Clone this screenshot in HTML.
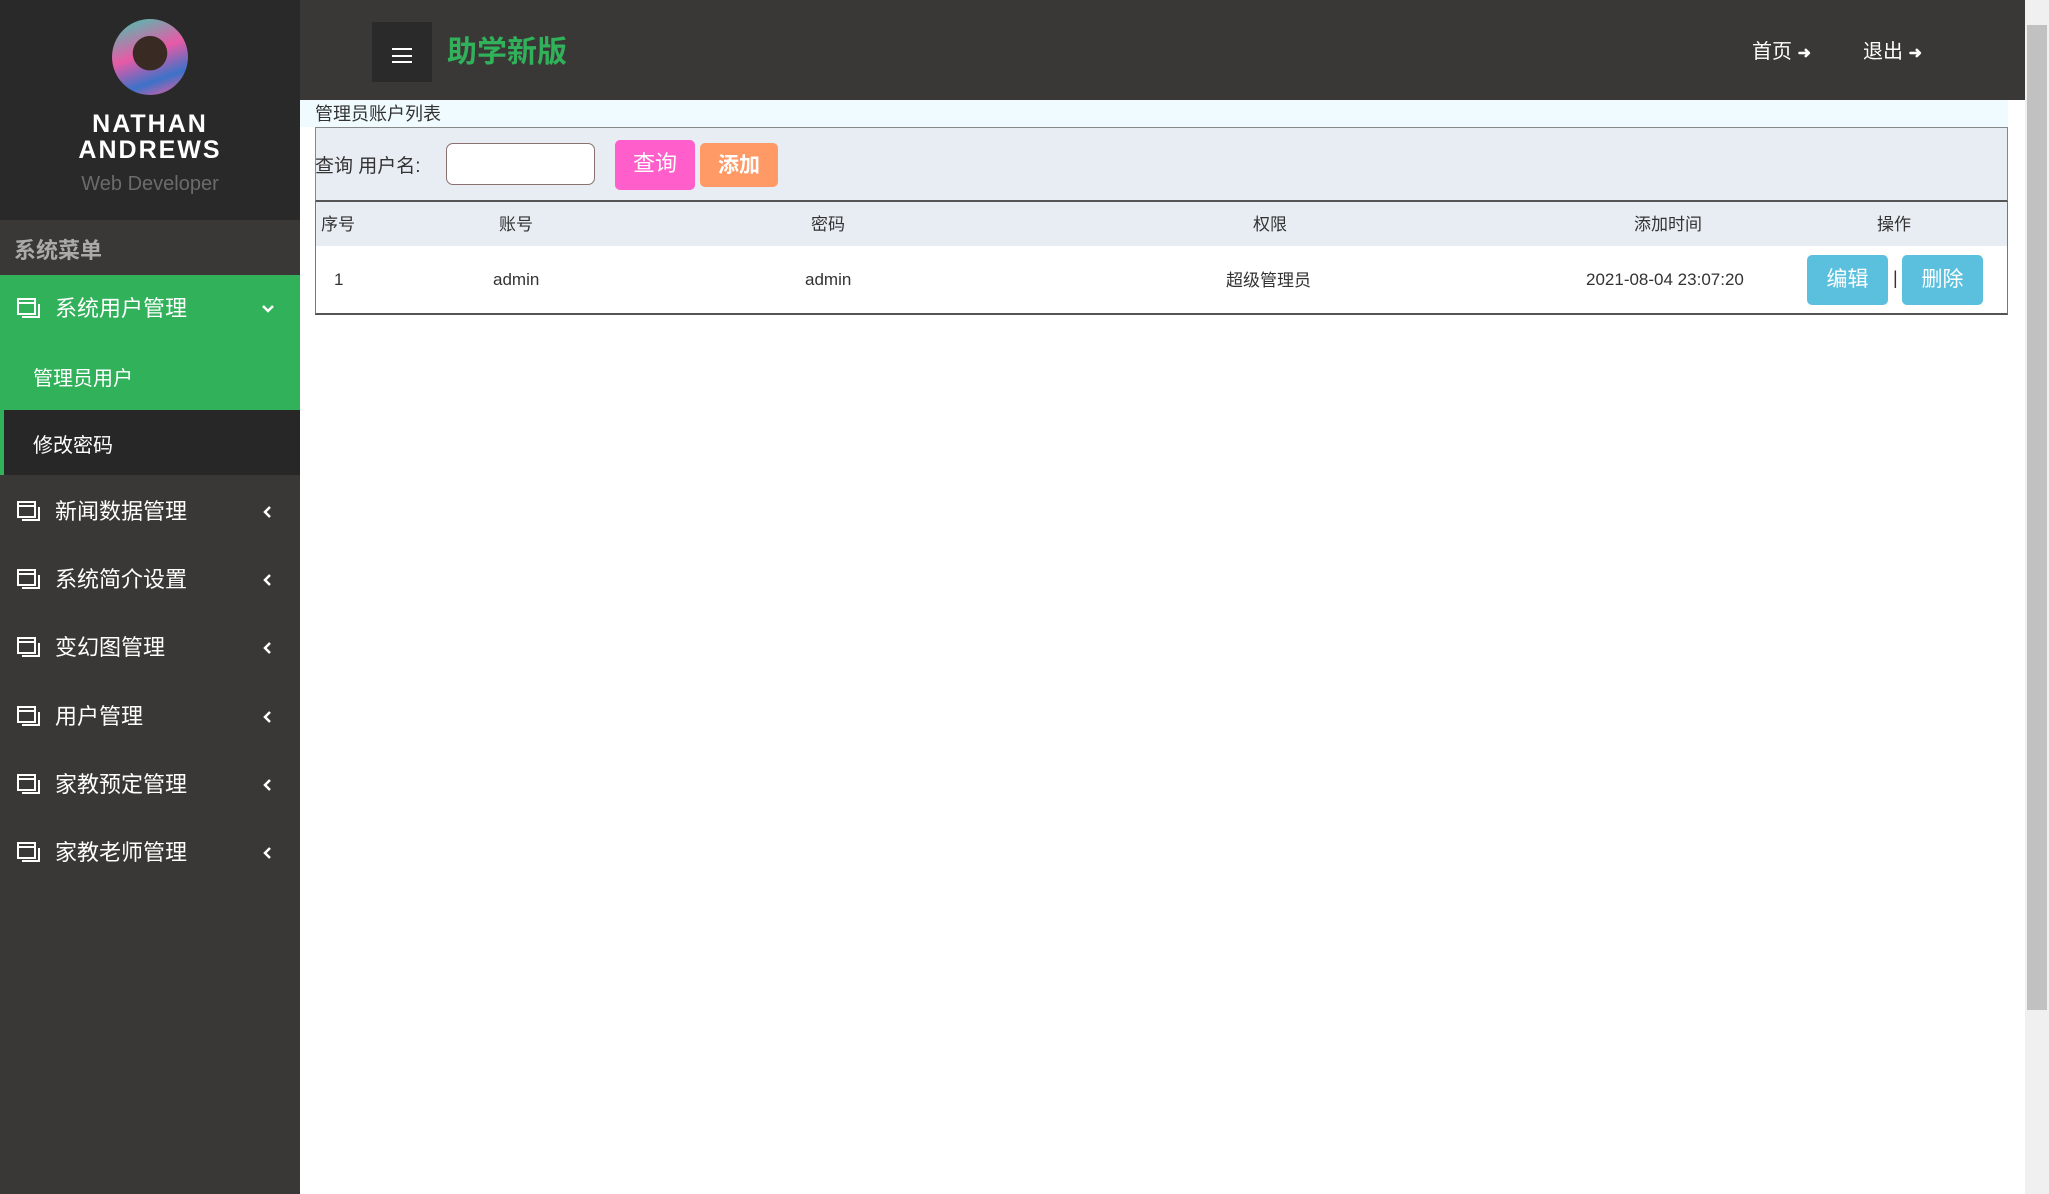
<!DOCTYPE html>
<html><head><meta charset="utf-8"><style>
*{margin:0;padding:0;box-sizing:border-box}
body{width:2049px;height:1194px;overflow:hidden;background:#fff;font-family:"Liberation Sans","Noto Sans CJK SC",sans-serif;position:relative}
.abs{position:absolute}
#side{left:0;top:0;width:300px;height:1194px;background:#3a3837}
#prof{left:0;top:0;width:300px;height:220px;background:#292929}
#head{left:300px;top:0;width:1725px;height:100px;background:#3a3837}
.mi{position:absolute;left:0;width:300px;height:68px;color:#fff;font-size:22px;line-height:68px}
.mi svg.ic{position:absolute;left:17px;top:23px}
.mi span{position:absolute;left:55px}
.mi svg.ch{position:absolute;left:261px;top:27px}
</style></head><body>
<div id="side" class="abs"></div>
<div id="prof" class="abs"></div>
<div class="abs" style="left:112px;top:19px;width:76px;height:76px;border-radius:50%;background:radial-gradient(circle at 50% 45%,#3a2a24 0 30%,transparent 31%),linear-gradient(160deg,#3fc9b0 0,#e85aa6 45%,#3b72c8 75%,#ff5a9c 100%)"></div>
<div class="abs" style="left:0;top:111px;width:300px;text-align:center;color:#fff;font-weight:bold;font-size:25px;line-height:26px;letter-spacing:2px">NATHAN<br>ANDREWS</div>
<div class="abs" style="left:0;top:173px;width:300px;text-align:center;color:#6b6b6b;font-size:20px">Web Developer</div>
<div class="abs" style="left:0;top:220px;width:300px;height:55px;background:#3a3837"></div>
<div class="abs" style="left:14px;top:233px;color:#aaa;font-weight:bold;font-size:22px">系统菜单</div>
<div class="abs" style="left:0;top:275px;width:300px;height:135px;background:#30b15a"></div>
<div class="mi" style="top:275px"><svg class="ic" width="24" height="22" viewBox="0 0 24 22" fill="none" stroke="#fff" stroke-width="2"><rect x="1" y="1" width="17" height="15"/><path d="M1 5h17M5 19h17V6"/></svg><span>系统用户管理</span><svg class="ch" width="14" height="14" viewBox="0 0 14 14" fill="none" stroke="#fff" stroke-width="2.5"><path d="M2 4l5 5 5-5"/></svg></div>
<div class="abs" style="left:33px;top:362px;color:#fff;font-size:20px">管理员用户</div>
<div class="abs" style="left:0;top:410px;width:300px;height:65px;background:#272727;border-left:4px solid #30b15a"></div>
<div class="abs" style="left:33px;top:429px;color:#fff;font-size:20px">修改密码</div>
<div class="mi" style="top:478px"><svg class="ic" width="24" height="22" viewBox="0 0 24 22" fill="none" stroke="#fff" stroke-width="2"><rect x="1" y="1" width="17" height="15"/><path d="M1 5h17M5 19h17V6"/></svg><span>新闻数据管理</span><svg class="ch" width="14" height="14" viewBox="0 0 14 14" fill="none" stroke="#fff" stroke-width="2.5"><path d="M9 2L4 7l5 5"/></svg></div>
<div class="mi" style="top:546px"><svg class="ic" width="24" height="22" viewBox="0 0 24 22" fill="none" stroke="#fff" stroke-width="2"><rect x="1" y="1" width="17" height="15"/><path d="M1 5h17M5 19h17V6"/></svg><span>系统简介设置</span><svg class="ch" width="14" height="14" viewBox="0 0 14 14" fill="none" stroke="#fff" stroke-width="2.5"><path d="M9 2L4 7l5 5"/></svg></div>
<div class="mi" style="top:614px"><svg class="ic" width="24" height="22" viewBox="0 0 24 22" fill="none" stroke="#fff" stroke-width="2"><rect x="1" y="1" width="17" height="15"/><path d="M1 5h17M5 19h17V6"/></svg><span>变幻图管理</span><svg class="ch" width="14" height="14" viewBox="0 0 14 14" fill="none" stroke="#fff" stroke-width="2.5"><path d="M9 2L4 7l5 5"/></svg></div>
<div class="mi" style="top:683px"><svg class="ic" width="24" height="22" viewBox="0 0 24 22" fill="none" stroke="#fff" stroke-width="2"><rect x="1" y="1" width="17" height="15"/><path d="M1 5h17M5 19h17V6"/></svg><span>用户管理</span><svg class="ch" width="14" height="14" viewBox="0 0 14 14" fill="none" stroke="#fff" stroke-width="2.5"><path d="M9 2L4 7l5 5"/></svg></div>
<div class="mi" style="top:751px"><svg class="ic" width="24" height="22" viewBox="0 0 24 22" fill="none" stroke="#fff" stroke-width="2"><rect x="1" y="1" width="17" height="15"/><path d="M1 5h17M5 19h17V6"/></svg><span>家教预定管理</span><svg class="ch" width="14" height="14" viewBox="0 0 14 14" fill="none" stroke="#fff" stroke-width="2.5"><path d="M9 2L4 7l5 5"/></svg></div>
<div class="mi" style="top:819px"><svg class="ic" width="24" height="22" viewBox="0 0 24 22" fill="none" stroke="#fff" stroke-width="2"><rect x="1" y="1" width="17" height="15"/><path d="M1 5h17M5 19h17V6"/></svg><span>家教老师管理</span><svg class="ch" width="14" height="14" viewBox="0 0 14 14" fill="none" stroke="#fff" stroke-width="2.5"><path d="M9 2L4 7l5 5"/></svg></div>

<div id="head" class="abs"></div>
<div class="abs" style="left:372px;top:22px;width:60px;height:60px;background:#2a2a2a"></div>
<div class="abs" style="left:392px;top:48px;width:20px;height:15px;border-top:2px solid #fff;border-bottom:2px solid #fff"><div style="margin-top:4.5px;height:2px;background:#fff"></div></div>
<div class="abs" style="left:447px;top:27px;color:#30b15a;font-size:30px;font-weight:bold">助学新版</div>
<div class="abs" style="left:1752px;top:35px;color:#fff;font-size:20px">首页 <b style="font-size:16px">➜</b></div>
<div class="abs" style="left:1863px;top:35px;color:#fff;font-size:20px">退出 <b style="font-size:16px">➜</b></div>

<div class="abs" style="left:2025px;top:0;width:24px;height:1194px;background:#f0f0f0"></div>
<div class="abs" style="left:2027px;top:25px;width:20px;height:985px;background:#c1c1c1"></div>

<div class="abs" style="left:300px;top:100px;width:1708px;height:27px;background:#f0fbff"></div>
<div class="abs" style="left:315px;top:100px;font-size:18px;color:#333">管理员账户列表</div>
<div class="abs" style="left:315px;top:127px;width:1693px;height:75px;background:#e8edf4;border:1px solid #888;border-bottom:2px solid #555"></div>
<div class="abs" style="left:315px;top:151px;font-size:19px;color:#333">查询 用户名:</div>
<div class="abs" style="left:446px;top:143px;width:149px;height:42px;background:#fff;border:1px solid #8a7070;border-radius:7px"></div>
<div class="abs" style="left:615px;top:140px;width:80px;height:50px;background:#ff5ecb;border-radius:5px;color:#fff;font-size:22px;text-align:center;line-height:48px">查询</div>
<div class="abs" style="left:700px;top:143px;width:78px;height:44px;background:#ff9966;border-radius:5px;color:#fff;font-size:21px;font-weight:bold;text-align:center;line-height:46px">添加</div>
<div class="abs" style="left:315px;top:202px;width:1693px;height:113px;border:1px solid #777;border-top:none;border-bottom:2px solid #555;background:#fff">
<div style="height:44px;background:#e8edf4"></div></div>
<div class="abs" style="left:321px;top:210px;font-size:17px;color:#333">序号</div>
<div class="abs" style="left:499px;top:210px;font-size:17px;color:#333">账号</div>
<div class="abs" style="left:811px;top:210px;font-size:17px;color:#333">密码</div>
<div class="abs" style="left:1253px;top:210px;font-size:17px;color:#333">权限</div>
<div class="abs" style="left:1634px;top:210px;font-size:17px;color:#333">添加时间</div>
<div class="abs" style="left:1877px;top:210px;font-size:17px;color:#333">操作</div>
<div class="abs" style="left:334px;top:270px;font-size:17px;color:#333">1</div>
<div class="abs" style="left:493px;top:270px;font-size:17px;color:#333">admin</div>
<div class="abs" style="left:805px;top:270px;font-size:17px;color:#333">admin</div>
<div class="abs" style="left:1226px;top:266px;font-size:17px;color:#333">超级管理员</div>
<div class="abs" style="left:1586px;top:270px;font-size:17px;color:#333">2021-08-04 23:07:20</div>
<div class="abs" style="left:1807px;top:255px;width:81px;height:50px;background:#5bc0de;border-radius:5px;color:#fff;font-size:21px;text-align:center;line-height:50px">编辑</div>
<div class="abs" style="left:1893px;top:268px;font-size:18px;color:#333">|</div>
<div class="abs" style="left:1902px;top:255px;width:81px;height:50px;background:#5bc0de;border-radius:5px;color:#fff;font-size:21px;text-align:center;line-height:50px">删除</div>
</body></html>
